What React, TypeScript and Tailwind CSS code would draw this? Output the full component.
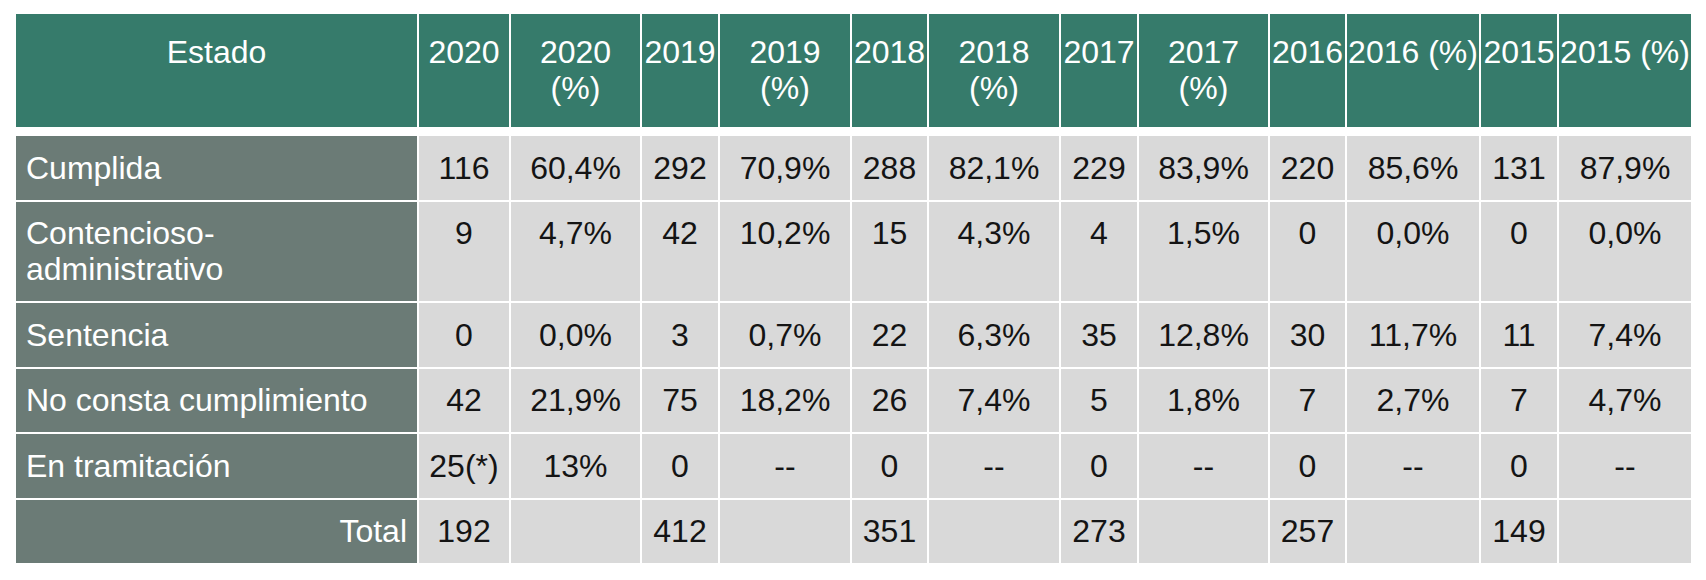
const cols = [
  { label: "2020", w: "w-[90px]" },
  { label: "2020", pct: true, wrap: true, w: "w-[129px]" },
  { label: "2019", w: "w-[76px]" },
  { label: "2019", pct: true, wrap: true, w: "w-[130px]" },
  { label: "2018", w: "w-[75px]" },
  { label: "2018", pct: true, wrap: true, w: "w-[130px]" },
  { label: "2017", w: "w-[76px]" },
  { label: "2017", pct: true, wrap: true, w: "w-[129px]" },
  { label: "2016", w: "w-[75px]" },
  { label: "2016", pct: true, wrap: false, w: "w-[132px]" },
  { label: "2015", w: "w-[76px]" },
  { label: "2015", pct: true, wrap: false, w: "w-[132px]" },
];

const rows: { estado: string[]; values: string[] }[] = [
  {
    estado: ["Cumplida"],
    values: ["116", "60,4%", "292", "70,9%", "288", "82,1%", "229", "83,9%", "220", "85,6%", "131", "87,9%"],
  },
  {
    estado: ["Contencioso-", "administrativo"],
    values: ["9", "4,7%", "42", "10,2%", "15", "4,3%", "4", "1,5%", "0", "0,0%", "0", "0,0%"],
  },
  {
    estado: ["Sentencia"],
    values: ["0", "0,0%", "3", "0,7%", "22", "6,3%", "35", "12,8%", "30", "11,7%", "11", "7,4%"],
  },
  {
    estado: ["No consta cumplimiento"],
    values: ["42", "21,9%", "75", "18,2%", "26", "7,4%", "5", "1,8%", "7", "2,7%", "7", "4,7%"],
  },
  {
    estado: ["En tramitación"],
    values: ["25(*)", "13%", "0", "--", "0", "--", "0", "--", "0", "--", "0", "--"],
  },
];

const totals = ["192", "", "412", "", "351", "", "273", "", "257", "", "149", ""];

export default function App() {
  return (
    <div className="min-h-[580px] w-[1706px] bg-white pl-[14px] pt-[12px] font-['Liberation_Sans',Arial,sans-serif] text-[32px] leading-[36px]">
      <table className="w-[1679px] table-fixed border-separate border-spacing-[2px]">
        <thead>
          <tr>
            <th className="w-[401px] border-b-[7px] border-white bg-[#367b6b] px-0 pb-[21px] pt-[20px] text-center align-top font-normal text-white">
              Estado
            </th>
            {cols.map((c, i) => (
              <th
                key={i}
                className={`${c.w} whitespace-nowrap border-b-[7px] border-white bg-[#367b6b] px-0 pb-[21px] pt-[20px] text-center align-top font-normal text-white`}
              >
                {c.label}
                {c.pct && (c.wrap ? <br /> : " ")}
                {c.pct && "(%)"}
              </th>
            ))}
          </tr>
        </thead>
        <tbody>
          {rows.map((r) => (
            <tr key={r.estado.join("")}>
              <td className="bg-[#6b7b76] px-[10px] py-[13.75px] text-left align-top text-white">
                {r.estado.map((line, j) => (
                  <div key={j}>{line}</div>
                ))}
              </td>
              {r.values.map((v, i) => (
                <td
                  key={i}
                  className="whitespace-nowrap bg-[#d9d9d9] px-0 py-[13.75px] text-center align-top text-[#141414]"
                >
                  {v}
                </td>
              ))}
            </tr>
          ))}
          <tr>
            <td className="bg-[#6b7b76] px-[10px] py-[13.75px] text-right align-top text-white">
              Total
            </td>
            {totals.map((v, i) => (
              <td
                key={i}
                className="whitespace-nowrap bg-[#d9d9d9] px-0 py-[13.75px] text-center align-top text-[#141414]"
              >
                {v}
              </td>
            ))}
          </tr>
        </tbody>
      </table>
    </div>
  );
}
